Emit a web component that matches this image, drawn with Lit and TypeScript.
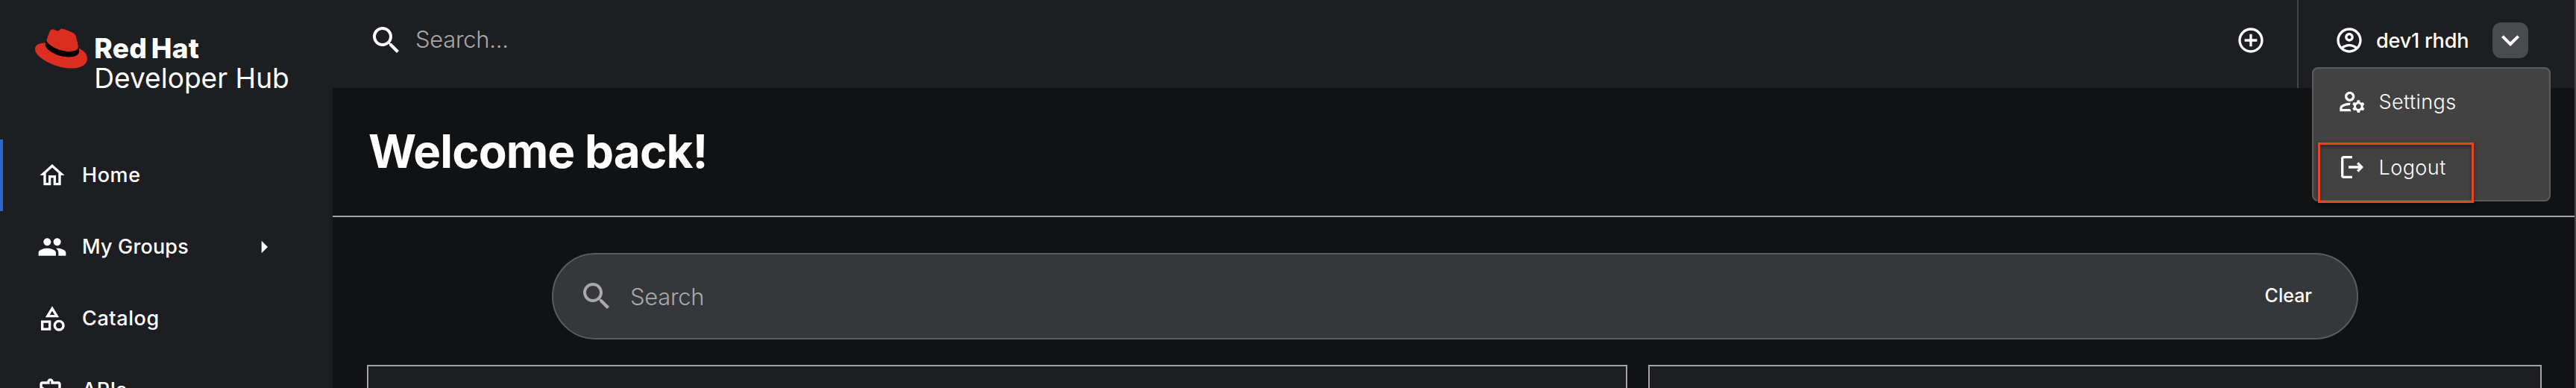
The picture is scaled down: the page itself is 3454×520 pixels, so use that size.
import { LitElement, html, css, svg } from 'lit';
import { customElement } from 'lit/decorators.js';
import { classMap } from 'lit/directives/class-map.js';

const icons = {
  home: 'm12 5.69 5 4.5V18h-2v-6H9v6H7v-7.81l5-4.5M12 3 2 12h3v8h6v-6h2v6h6v-8h3L12 3z',
  groups:
    'M16 11c1.66 0 2.99-1.34 2.99-3S17.66 5 16 5c-1.66 0-3 1.34-3 3s1.34 3 3 3zm-8 0c1.66 0 2.99-1.34 2.99-3S9.66 5 8 5C6.34 5 5 6.34 5 8s1.34 3 3 3zm0 2c-2.33 0-7 1.17-7 3.5V19h14v-2.5c0-2.33-4.67-3.5-7-3.5zm8 0c-.29 0-.62.02-.97.05 1.16.84 1.97 1.97 1.97 3.45V19h6v-2.5c0-2.33-4.67-3.5-7-3.5z',
  catalog:
    'M12 2l-5.5 9h11L12 2zm0 3.84L13.93 9h-3.87L12 5.84zM17.5 13c-2.49 0-4.5 2.01-4.5 4.5s2.01 4.5 4.5 4.5 4.5-2.01 4.5-4.5-2.01-4.5-4.5-4.5zm0 7c-1.38 0-2.5-1.12-2.5-2.5s1.12-2.5 2.5-2.5 2.5 1.12 2.5 2.5-1.12 2.5-2.5 2.5zM3 21.5h8v-8H3v8zm2-6h4v4H5v-4z',
  apis:
    'M10.5 4.5c.28 0 .5.22.5.5v2h6v6h2c.28 0 .5.22.5.5s-.22.5-.5.5h-2v6h-2.12c-.68-1.75-2.39-3-4.38-3s-3.7 1.25-4.38 3H4v-2.12c1.75-.68 3-2.39 3-4.38 0-1.99-1.24-3.7-2.99-4.38L4 7h6V5c0-.28.22-.5.5-.5m0-2C9.12 2.5 8 3.62 8 5H4c-1.1 0-1.99.9-1.99 2v3.8h.29c1.49 0 2.7 1.21 2.7 2.7s-1.21 2.7-2.7 2.7H2V20c0 1.1.9 2 2 2h3.8v-.3c0-1.49 1.21-2.7 2.7-2.7s2.7 1.21 2.7 2.7v.3H17c1.1 0 2-.9 2-2v-4c1.38 0 2.5-1.12 2.5-2.5S20.38 11 19 11V7c0-1.1-.9-2-2-2h-4c0-1.38-1.12-2.5-2.5-2.5z',
  caret: 'm10 17 5-5-5-5v10z',
  search:
    'M15.5 14h-.79l-.28-.27C15.41 12.59 16 11.11 16 9.5 16 5.91 13.09 3 9.5 3S3 5.91 3 9.5 5.91 16 9.5 16c1.61 0 3.09-.59 4.23-1.57l.27.28v.79l5 4.99L20.49 19l-4.99-5zm-6 0C7.01 14 5 11.99 5 9.5S7.01 5 9.5 5 14 7.01 14 9.5 11.99 14 9.5 14z',
  add: 'M13 7h-2v4H7v2h4v4h2v-4h4v-2h-4V7zm-1-5C6.48 2 2 6.48 2 12s4.48 10 10 10 10-4.48 10-10S17.52 2 12 2zm0 18c-4.41 0-8-3.59-8-8s3.59-8 8-8 8 3.59 8 8-3.59 8-8 8z',
  account:
    'M12 2C6.48 2 2 6.48 2 12s4.48 10 10 10 10-4.48 10-10S17.52 2 12 2zM7.35 18.5C8.66 17.56 10.26 17 12 17s3.34.56 4.65 1.5c-1.31.94-2.91 1.5-4.65 1.5s-3.34-.56-4.65-1.5zm10.79-1.38C16.45 15.8 14.32 15 12 15s-4.45.8-6.14 2.12C4.7 15.73 4 13.95 4 12c0-4.42 3.58-8 8-8s8 3.58 8 8c0 1.95-.7 3.73-1.86 5.12zM12 6c-1.93 0-3.5 1.57-3.5 3.5S10.07 13 12 13s3.5-1.57 3.5-3.5S13.93 6 12 6zm0 5c-.83 0-1.5-.67-1.5-1.5S11.17 8 12 8s1.5.67 1.5 1.5S12.83 11 12 11z',
  chevron: 'M7.41 8.59 12 13.17l4.59-4.58L18 10l-6 6-6-6 1.41-1.41z',
  settings:
    'M4 18v-.65c0-.34.16-.66.41-.81C6.1 15.53 8.03 15 10 15c.03 0 .05 0 .08.01.1-.7.3-1.37.59-1.98-.22-.02-.44-.03-.67-.03-2.42 0-4.68.67-6.61 1.82-.88.52-1.39 1.5-1.39 2.53V20h9.26c-.42-.6-.75-1.28-.97-2H4zM10 12c2.21 0 4-1.79 4-4s-1.79-4-4-4-4 1.79-4 4 1.79 4 4 4zm0-6c1.1 0 2 .9 2 2s-.9 2-2 2-2-.9-2-2 .9-2 2-2zM20.75 16c0-.22-.03-.42-.06-.63l1.14-1.01-1-1.73-1.45.49c-.32-.27-.68-.48-1.08-.63L18 11h-2l-.3 1.49c-.4.15-.76.36-1.08.63l-1.45-.49-1 1.73 1.14 1.01c-.03.21-.06.41-.06.63s.03.42.06.63l-1.14 1.01 1 1.73 1.45-.49c.32.27.68.48 1.08.63L16 21h2l.3-1.49c.4-.15.76-.36 1.08-.63l1.45.49 1-1.73-1.14-1.01c.03-.21.06-.41.06-.63zM17 18c-1.1 0-2-.9-2-2s.9-2 2-2 2 .9 2 2-.9 2-2 2z',
  logout:
    'M5 21q-.825 0-1.413-.587Q3 19.825 3 19V5q0-.825.587-1.413Q4.175 3 5 3h7v2H5v14h7v2ZM17 8l-1.4 1.4 1.6 1.6H9v2h8.2l-1.6 1.6L17 16l4-4Z',
};

const icon = (name: keyof typeof icons, large = false) => html`
  <svg class=${classMap({ icon: true, large })} viewBox="0 0 24 24" aria-hidden="true">
    ${svg`<path d=${icons[name]} />`}
  </svg>
`;

const shared = css`
  :host,
  * {
    box-sizing: border-box;
  }
  .icon {
    display: block;
    flex: none;
    width: 40px;
    height: 40px;
    fill: currentColor;
  }
  .large {
    width: 48px;
    height: 48px;
  }
`;

@customElement('side-nav')
class SideNav extends LitElement {
  static styles = [
    shared,
    css`
      :host {
        display: block;
        background: #1d1e22;
        overflow: hidden;
      }
      .logo {
        display: flex;
        align-items: flex-start;
        height: 187px;
        padding: 30px 0 0 46.7px;
      }
      .hat {
        width: 70px;
        height: 70px;
        flex: none;
      }
      .brand {
        padding: 15px 0 0 9.6px;
        font-size: 37.1px;
        line-height: 39.5px;
        white-space: nowrap;
      }
      .brand b {
        display: block;
        font-weight: 800;
        letter-spacing: 0.3px;
        word-spacing: -3px;
      }
      .item {
        display: flex;
        align-items: center;
        height: 96px;
        padding: 0 72px 0 46px;
        border-left: 4px solid transparent;
        font-size: 27px;
        font-weight: 500;
      }
      .active {
        border-left-color: #2b66cb;
      }
      .label {
        flex: 1;
        padding: 0 0 1px 20px;
        letter-spacing: 0.6px;
      }
      .tight {
        letter-spacing: 0.16px;
      }
    `,
  ];

  items: { icon: keyof typeof icons; label: string; active?: boolean; expandable?: boolean }[] = [
    { icon: 'home', label: 'Home', active: true },
    { icon: 'groups', label: 'My Groups', expandable: true },
    { icon: 'catalog', label: 'Catalog' },
    { icon: 'apis', label: 'APIs' },
  ];

  render() {
    return html`
      <div class="logo">
        <svg class="hat" viewBox="0 0 24 24" aria-hidden="true">
          <path
            fill="#000"
            d="M20.11 11.951c.218 1.032.218 1.14.218 1.277 0 1.765-1.984 2.745-4.593 2.745-5.895.004-11.06-3.451-11.06-5.734a2.326 2.326 0 0 1 .19-.925L5.4 8 19.6 9.8Z"
          />
          <path
            fill="#dc2e20"
            d="M16.009 13.386c1.577 0 3.86-.326 3.86-2.202a1.765 1.765 0 0 0-.04-.431l-.94-4.08c-.216-.898-.406-1.305-1.982-2.093-1.223-.625-3.888-1.658-4.676-1.658-.733 0-.947.946-1.822.946-.842 0-1.467-.706-2.255-.706-.757 0-1.25.515-1.63 1.576 0 0-1.06 2.99-1.197 3.424a.81.81 0 0 0-.028.245c0 1.162 4.577 4.974 10.71 4.974m4.101-1.435c.218 1.032.218 1.14.218 1.277 0 1.765-1.984 2.745-4.593 2.745-5.895.004-11.06-3.451-11.06-5.734a2.326 2.326 0 0 1 .19-.925C2.746 9.415 0 9.794 0 12.217c0 3.969 9.405 8.861 16.851 8.861 5.71 0 7.149-2.582 7.149-4.62 0-1.605-1.387-3.425-3.887-4.512"
          />
        </svg>
        <div class="brand"><b>Red Hat</b>Developer Hub</div>
      </div>
      <nav>
        ${this.items.map(
          (i) => html`
            <div class=${classMap({ item: true, active: !!i.active })}>
              ${icon(i.icon)}
              <span class=${classMap({ label: true, tight: !!i.expandable })}>${i.label}</span>
              ${i.expandable ? icon('caret') : ''}
            </div>
          `,
        )}
      </nav>
    `;
  }
}

@customElement('top-bar')
class TopBar extends LitElement {
  static styles = [
    shared,
    css`
      :host {
        display: flex;
        height: 118px;
        padding: 0 60px 10px 48px;
        background: #1d1e22;
        position: relative;
        z-index: 1;
      }
      .search {
        flex: 1;
        display: flex;
        align-items: center;
        gap: 15px;
      }
      .placeholder {
        padding-bottom: 3px;
        font-size: 30.8px;
        font-weight: 300;
        letter-spacing: -0.2px;
        color: #a9a9ab;
      }
      .create {
        display: flex;
        align-items: center;
        padding-right: 42px;
      }
      .profile {
        display: flex;
        align-items: center;
        width: 312px;
        height: 118px;
        padding: 0 2px 10px 48px;
        border-left: 2px solid #444548;
        position: relative;
      }
      .name {
        flex: 1;
        padding-left: 16px;
        font-size: 27px;
        font-weight: 550;
        letter-spacing: -0.2px;
      }
      .toggle {
        border-radius: 12px;
        background: #4a4b4f;
      }
      .menu {
        position: absolute;
        top: 90px;
        right: -28px;
        width: 320px;
        height: 180px;
        border: 2px solid #5b5b5b;
        border-radius: 8px;
        background: #424242;
      }
      .entry {
        display: flex;
        align-items: center;
        gap: 15.5px;
        height: 88px;
        padding-left: 32px;
        font-size: 27px;
        font-weight: 350;
        letter-spacing: 0.45px;
      }
      .outline {
        position: absolute;
        left: 6px;
        top: 99px;
        width: 209px;
        height: 81px;
        border: 3px solid #ea4426;
        box-shadow:
          0 2px 5px rgba(0, 0, 0, 0.4),
          inset 0 3px 5px rgba(0, 0, 0, 0.35);
      }
    `,
  ];

  render() {
    return html`
      <div class="search">${icon('search', true)}<span class="placeholder">Search...</span></div>
      <div class="create">${icon('add')}</div>
      <div class="profile">
        ${icon('account')}
        <span class="name">dev1 rhdh</span>
        <span class="toggle">${icon('chevron', true)}</span>
        <div class="menu">
          <div class="entry">${icon('settings')}<span>Settings</span></div>
          <div class="entry">${icon('logout')}<span>Logout</span></div>
          <div class="outline"></div>
        </div>
      </div>
    `;
  }
}

@customElement('home-page')
class HomePage extends LitElement {
  static styles = [
    shared,
    css`
      :host {
        display: block;
        background: #111214;
      }
      .title {
        height: 173px;
        margin: 0;
        padding: 0 0 2px 48px;
        border-bottom: 2px solid #a1a3a4;
        font-size: 61.9px;
        line-height: 169px;
        font-weight: 700;
        letter-spacing: -0.88px;
      }
      .bar {
        display: flex;
        align-items: center;
        gap: 21px;
        height: 116px;
        margin: 48px 290px 34px 294px;
        padding: 0 60px 0 34px;
        border: 2px solid #5a5b5d;
        border-radius: 58px;
        background: #36373a;
        color: #a9a9ab;
      }
      .hint {
        flex: 1;
        font-size: 30.8px;
        font-weight: 300;
        letter-spacing: -0.2px;
      }
      .clear {
        padding-bottom: 2px;
        font-size: 25px;
        font-weight: 500;
        color: #fff;
      }
      .cards {
        display: grid;
        grid-template-columns: 1690px 1198px;
        gap: 28px;
        padding-left: 46px;
      }
      .card {
        height: 31px;
        border: 2px solid #a3a3a3;
        border-bottom: 0;
        background: #1d1e22;
      }
    `,
  ];

  render() {
    return html`
      <h1 class="title">Welcome back!</h1>
      <div class="bar">
        ${icon('search', true)}<span class="hint">Search</span><span class="clear">Clear</span>
      </div>
      <div class="cards">
        <section class="card"></section>
        <section class="card"></section>
      </div>
    `;
  }
}

@customElement('app-root')
class AppRoot extends LitElement {
  static styles = css`
    :host {
      display: grid;
      grid-template-columns: 446px minmax(0, 1fr);
      height: 520px;
      box-sizing: border-box;
      border-right: 2px solid #48484a;
      overflow: hidden;
      background: #111214;
      color: #fff;
      font-family: Inter, 'Liberation Sans', sans-serif;
    }
  `;

  render() {
    return html`
      <side-nav></side-nav>
      <main>
        <top-bar></top-bar>
        <home-page></home-page>
      </main>
    `;
  }
}
